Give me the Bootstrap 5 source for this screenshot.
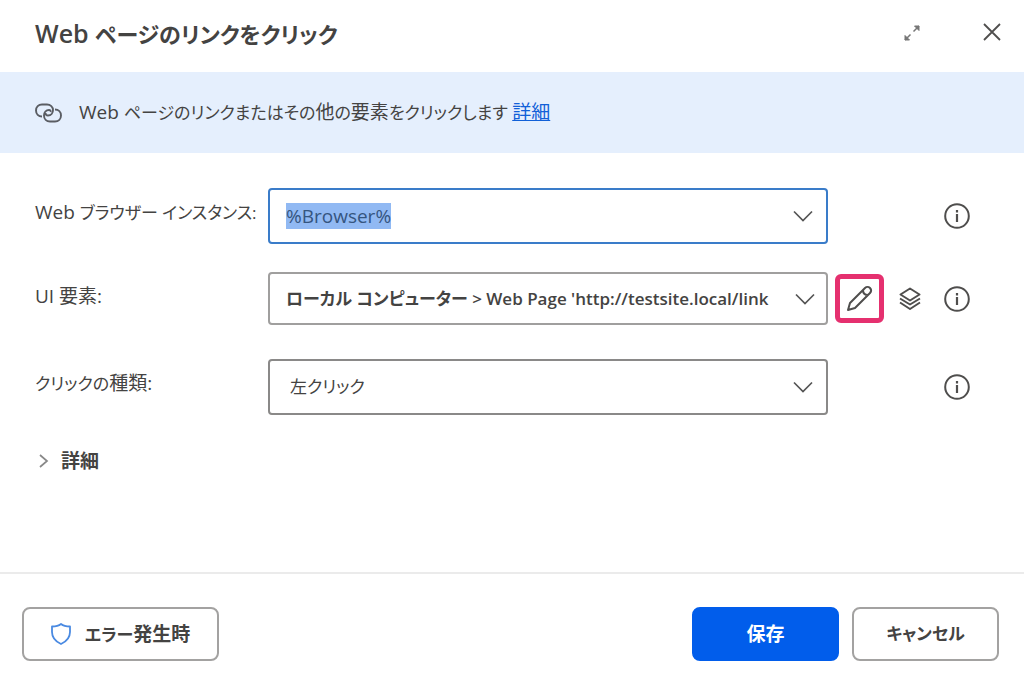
<!DOCTYPE html>
<html lang="ja">
<head>
<meta charset="utf-8">
<meta name="viewport" content="width=device-width, initial-scale=1">
<title>Web ページのリンクをクリック</title>
<link rel="stylesheet" href="https://cdn.jsdelivr.net/npm/bootstrap@5.3.0/dist/css/bootstrap.min.css">
<style>
  :root {
    --ink: #444342;
    --chevron: url("data:image/svg+xml,%3Csvg xmlns='http://www.w3.org/2000/svg' viewBox='0 0 20 12' fill='none' stroke='%23555' stroke-width='1.7'%3E%3Cpath d='M1 1.5l9 9 9-9'/%3E%3C/svg%3E");
  }
  body {
    font-family: "Open Sans", "Noto Sans CJK JP", sans-serif;
    font-size: 17px;
    line-height: 28px;
    color: var(--ink);
    background: #fff;
  }
  body, button, input, select { font-feature-settings: "palt"; }
  svg { display: block; flex: none; }
  /* Latin and kanji are set larger than kana */
  .full-size { font-size: 19px; }
  .dialog-head { height: 72px; padding: 0 20px 6px 35px; }
  .dialog-head h1 { font-size: 22px; line-height: 32px; font-weight: 600; }
  .dialog-head .full-size { font-size: 25px; }
  .icon-button { border: 0; background: none; padding: 0; color: #4f4e4d; }
  .head-tools { gap: 59px; }
  .summary-bar { background: #e5effd; height: 81px; padding: 0 35px; gap: 17px; }
  .summary-bar a { color: #1160d8; }
  .dialog-main { padding: 35px 54px 0 35px; }
  .field-row { display: grid; grid-template-columns: 233px minmax(0, 1fr) 142px; align-items: center; }
  .field-row + .field-row { margin-top: 28px; }
  .field-row + .loose { margin-top: 34px; }
  .field-row label { margin-bottom: 8px; white-space: nowrap; }
  .field-row .near-label { margin-bottom: 5px; }
  .field-box, .field-box:focus {
    height: 56px;
    border: 2px solid #8a8988;
    border-radius: 4px;
    padding: 0 40px 0 16px;
    font-size: 19px;
    line-height: 28px;
    color: var(--ink);
    background: #fff var(--chevron) no-repeat right 13px center / 20px 12px;
    box-shadow: none;
  }
  .field-box.compact { height: 53px; border-color: #a09f9e; font-weight: 600; font-size: 17px; background-position: right 11px center; }
  .field-box.kana-text { font-size: 17px; padding-left: 20px; }
  .field-box:focus { border-color: #3a7cc9; }
  .field-box::selection { background: #91b9f3; color: #35557f; }
  .row-tools { display: flex; align-items: center; justify-content: flex-end; gap: 22px; }
  .row-tools .marked { border: 5px solid #e5306f; border-radius: 6px; padding: 6px; margin-right: -8px; }
  .more-toggle { margin-top: 32px; gap: 12px; font-weight: 600; color: var(--ink); }
  .dialog-foot { border-top: 2px solid #ebebeb; padding: 33px 25px 20px 22px; gap: 13px; }
  .dialog-foot .btn {
    height: 54px;
    min-width: 147px;
    border: 2px solid #a3a2a1;
    border-radius: 8px;
    font-size: 17px;
    line-height: 28px;
    font-weight: 600;
    color: var(--ink);
    background: #fff;
  }
  .dialog-foot .error-button { min-width: 197px; gap: 14px; }
  .dialog-foot .save-button { background: #015deb; border-color: #015deb; color: #fff; font-size: 19px; }
</style>
</head>
<body>
<form class="d-flex flex-column min-vh-100">
  <header class="dialog-head d-flex align-items-center justify-content-between">
    <h1 class="m-0"><span class="full-size">Web </span>ページのリンクをクリック</h1>
    <div class="head-tools d-flex align-items-center">
      <button type="button" class="icon-button" aria-label="拡大">
        <svg width="18" height="18" viewBox="0 0 18 18" fill="none" stroke="#777" stroke-width="1.500"><path d="M10.500 7.500L16 2M7.500 10.500L2 16"/><path d="M11.500 2H16V6.500L11.500 2ZM2 11.500V16H6.500L2 11.500Z" fill="#777" stroke-width="1"/></svg>
      </button>
      <button type="button" class="icon-button" aria-label="閉じる">
        <svg width="24" height="24" viewBox="0 0 24 24" fill="none" stroke="currentColor" stroke-width="1.800"><path d="M4 3L20 19M20 3L4 19"/></svg>
      </button>
    </div>
  </header>

  <div class="summary-bar d-flex align-items-center">
    <svg width="27" height="20" viewBox="0 0 27 20" fill="none" stroke="#5a5d63" stroke-width="1.900"><path d="M7 13.500C3.500 13.500 1 11 1 7.500C1 4 3.500 1.500 7 1.500H12C15.500 1.500 18 4 18 7C18 10 16 12.500 13 12.500C11.500 12.500 10.500 11.500 10.500 10"/><path d="M20 6.500C23.500 6.500 26 9 26 12.500C26 16 23.500 18.500 20 18.500H15C11.500 18.500 9 16 9 12.500C9 9.500 11 7 14 7C15.300 7 16 8 15.500 9"/></svg>
    <p class="m-0"><span class="full-size">Web </span>ページのリンクまたはその<span class="full-size">他</span>の<span class="full-size">要素</span>をクリックします <a class="full-size" href="#">詳細</a></p>
  </div>

  <main class="dialog-main flex-grow-1">
    <div class="field-row">
      <label for="browser"><span class="full-size">Web </span>ブラウザー インスタンス:</label>
      <input id="browser" class="form-control field-box" type="text" value="%Browser%" autofocus>
      <div class="row-tools">
        <button type="button" class="icon-button" aria-label="情報"><svg width="26" height="26" viewBox="0 0 26 26" fill="none" stroke="currentColor" stroke-width="2"><circle cx="13" cy="13" r="11.800"/><path d="M13 11V19M13 7V9.500" stroke-width="2.200"/></svg></button>
      </div>
    </div>
    <div class="field-row">
      <label class="near-label full-size" for="element">UI 要素:</label>
      <select id="element" class="form-select field-box compact"><option>ローカル コンピューター &gt; Web Page 'http://testsite.local/link</option></select>
      <div class="row-tools">
        <button type="button" class="icon-button marked" aria-label="編集"><svg width="27" height="27" viewBox="0 0 27 27" fill="none" stroke="currentColor" stroke-width="2" stroke-linejoin="round"><path d="M2 25L4 18L19 3C20.500 1.500 22.500 1.500 24 3C25.500 4.500 25.500 6.500 24 8L9 23L2 25ZM17 5C17 8 19 10 22 10"/></svg></button>
        <button type="button" class="icon-button" aria-label="UI 要素リポジトリ"><svg width="24" height="24" viewBox="0 0 24 24" fill="none" stroke="currentColor" stroke-width="2" stroke-linejoin="round"><path d="M12 1.500L21.500 7.500L12 13.500L2.500 7.500ZM2 11.500L12 17.500L22 11.500M2 15.500L12 22L22 15.500"/></svg></button>
        <button type="button" class="icon-button" aria-label="情報"><svg width="26" height="26" viewBox="0 0 26 26" fill="none" stroke="currentColor" stroke-width="2"><circle cx="13" cy="13" r="11.800"/><path d="M13 11V19M13 7V9.500" stroke-width="2.200"/></svg></button>
      </div>
    </div>
    <div class="field-row loose">
      <label for="click-type">クリックの<span class="full-size">種類:</span></label>
      <select id="click-type" class="form-select field-box kana-text"><option>左クリック</option></select>
      <div class="row-tools">
        <button type="button" class="icon-button" aria-label="情報"><svg width="26" height="26" viewBox="0 0 26 26" fill="none" stroke="currentColor" stroke-width="2"><circle cx="13" cy="13" r="11.800"/><path d="M13 11V19M13 7V9.500" stroke-width="2.200"/></svg></button>
      </div>
    </div>
    <button type="button" class="icon-button more-toggle full-size d-flex align-items-center" aria-expanded="false">
      <svg width="14" height="16" viewBox="0 0 14 16" fill="none" stroke="#888" stroke-width="1.700"><path d="M5 2L12 8L5 14"/></svg>詳細
    </button>
  </main>

  <footer class="dialog-foot d-flex align-items-center">
    <button type="button" class="btn error-button d-flex align-items-center justify-content-center me-auto">
      <svg width="20" height="22" viewBox="0 0 20 22" fill="none" stroke="#4a8ae2" stroke-width="1.800" stroke-linejoin="round"><path d="M10 1C7.500 3 4.500 3.500 1 3.500V9C1 15 4.500 18.500 10 21C15.500 18.500 19 15 19 9V3.500C15.500 3.500 12.500 3 10 1Z"/></svg><span>エラー<span class="full-size">発生時</span></span>
    </button>
    <button type="submit" class="btn save-button">保存</button>
    <button type="button" class="btn">キャンセル</button>
  </footer>
</form>
<script src="https://cdn.jsdelivr.net/npm/bootstrap@5.3.0/dist/js/bootstrap.bundle.min.js"></script>
<script>
  const browserField = document.getElementById('browser');
  browserField.focus();
  browserField.select();
</script>
</body>
</html>
